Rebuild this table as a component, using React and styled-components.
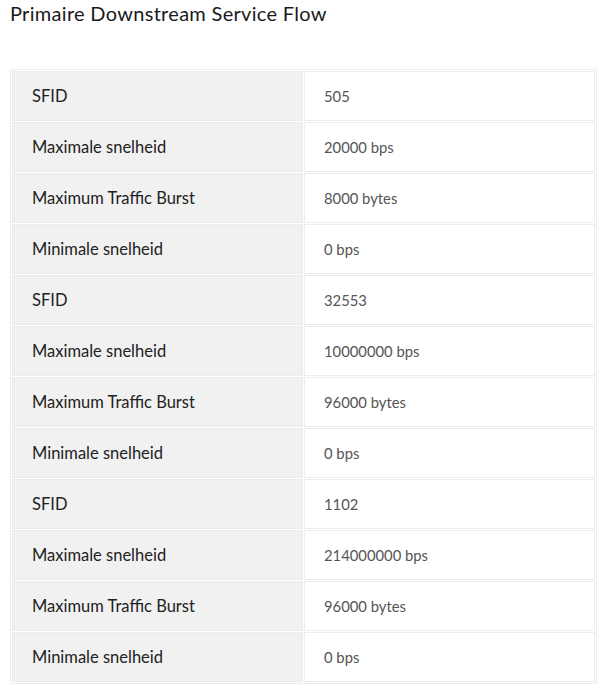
import styled, { createGlobalStyle } from "styled-components";

const GlobalStyle = createGlobalStyle`
  body {
    margin: 0;
    background: #fff;
    font-family: "Lato", "Open Sans", sans-serif;
  }
`;

const Page = styled.div`
  padding: 0 10px;
`;

const Title = styled.h2`
  margin: 0;
  padding-top: 1px;
  font-size: 20px;
  font-weight: 400;
  color: #1a1a1a;
  line-height: 24px;
  letter-spacing: 0.3px;
`;

const Table = styled.table`
  margin-top: 44px;
  width: 587px;
  table-layout: fixed;
  border: 1px solid #ececec;
  border-spacing: 1px;
`;

const Label = styled.td`
  width: 270px;
  height: 48px;
  padding: 0 0 0 19px;
  background: #f1f1f1;
  border: 1px solid #ececec;
  font-size: 16.5px;
  color: #222;
`;

const Value = styled.td`
  padding: 0 0 0 19px;
  background: #fff;
  border: 1px solid #ececec;
  font-size: 14.8px;
  color: #555;
`;

const flows = [
  { sfid: "505", max: "20000 bps", burst: "8000 bytes", min: "0 bps" },
  { sfid: "32553", max: "10000000 bps", burst: "96000 bytes", min: "0 bps" },
  { sfid: "1102", max: "214000000 bps", burst: "96000 bytes", min: "0 bps" },
];

const App = () => {
  const rows = flows.flatMap((f) => [
    ["SFID", f.sfid],
    ["Maximale snelheid", f.max],
    ["Maximum Traffic Burst", f.burst],
    ["Minimale snelheid", f.min],
  ]);

  return (
    <Page>
      <GlobalStyle />
      <Title>Primaire Downstream Service Flow</Title>
      <Table>
        <tbody>
          {rows.map(([label, value], i) => (
            <tr key={i}>
              <Label>{label}</Label>
              <Value>{value}</Value>
            </tr>
          ))}
        </tbody>
      </Table>
    </Page>
  );
};

export default App;
